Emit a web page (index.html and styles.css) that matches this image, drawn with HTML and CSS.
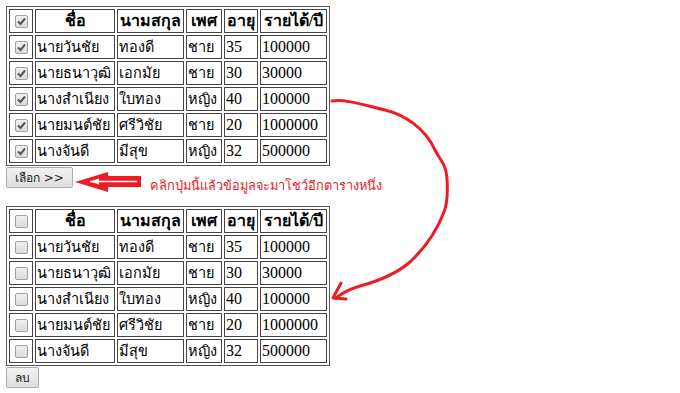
FILE: index.html
```html
<!DOCTYPE html>
<html lang="th">
<head>
<meta charset="utf-8">
<title>ตาราง</title>
<link rel="stylesheet" href="styles.css">
</head>
<body>
<table class="grid">
  <tr><th class="c-cb"><span class="cb on"><svg viewBox="0 0 13 13" width="13" height="13"><path d="M3 6.5 L5.5 9 L10 3.5" fill="none" stroke="#555" stroke-width="2"/></svg></span></th><th class="c-name">ชื่อ</th><th class="c-sur">นามสกุล</th><th class="c-sex">เพศ</th><th class="c-age">อายุ</th><th class="c-inc">รายได้/ปี</th></tr>
  <tr><td><span class="cb on"><svg viewBox="0 0 13 13" width="13" height="13"><path d="M3 6.5 L5.5 9 L10 3.5" fill="none" stroke="#555" stroke-width="2"/></svg></span></td><td class="t">นายวันชัย</td><td class="t">ทองดี</td><td class="t">ชาย</td><td>35</td><td>100000</td></tr>
  <tr><td><span class="cb on"><svg viewBox="0 0 13 13" width="13" height="13"><path d="M3 6.5 L5.5 9 L10 3.5" fill="none" stroke="#555" stroke-width="2"/></svg></span></td><td class="t">นายธนาวุฒิ</td><td class="t">เอกมัย</td><td class="t">ชาย</td><td>30</td><td>30000</td></tr>
  <tr><td><span class="cb on"><svg viewBox="0 0 13 13" width="13" height="13"><path d="M3 6.5 L5.5 9 L10 3.5" fill="none" stroke="#555" stroke-width="2"/></svg></span></td><td class="t">นางสำเนียง</td><td class="t">ใบทอง</td><td class="t">หญิง</td><td>40</td><td>100000</td></tr>
  <tr><td><span class="cb on"><svg viewBox="0 0 13 13" width="13" height="13"><path d="M3 6.5 L5.5 9 L10 3.5" fill="none" stroke="#555" stroke-width="2"/></svg></span></td><td class="t">นายมนต์ชัย</td><td class="t">ศรีวิชัย</td><td class="t">ชาย</td><td>20</td><td>1000000</td></tr>
  <tr><td><span class="cb on"><svg viewBox="0 0 13 13" width="13" height="13"><path d="M3 6.5 L5.5 9 L10 3.5" fill="none" stroke="#555" stroke-width="2"/></svg></span></td><td class="t">นางจันดี</td><td class="t">มีสุข</td><td class="t">หญิง</td><td>32</td><td>500000</td></tr>
</table>
<div class="btnrow"><button class="btn">เลือก &gt;&gt;</button></div>
<div class="gap"></div>
<table class="grid">
  <tr><th class="c-cb"><span class="cb"></span></th><th class="c-name">ชื่อ</th><th class="c-sur">นามสกุล</th><th class="c-sex">เพศ</th><th class="c-age">อายุ</th><th class="c-inc">รายได้/ปี</th></tr>
  <tr><td><span class="cb"></span></td><td class="t">นายวันชัย</td><td class="t">ทองดี</td><td class="t">ชาย</td><td>35</td><td>100000</td></tr>
  <tr><td><span class="cb"></span></td><td class="t">นายธนาวุฒิ</td><td class="t">เอกมัย</td><td class="t">ชาย</td><td>30</td><td>30000</td></tr>
  <tr><td><span class="cb"></span></td><td class="t">นางสำเนียง</td><td class="t">ใบทอง</td><td class="t">หญิง</td><td>40</td><td>100000</td></tr>
  <tr><td><span class="cb"></span></td><td class="t">นายมนต์ชัย</td><td class="t">ศรีวิชัย</td><td class="t">ชาย</td><td>20</td><td>1000000</td></tr>
  <tr><td><span class="cb"></span></td><td class="t">นางจันดี</td><td class="t">มีสุข</td><td class="t">หญิง</td><td>32</td><td>500000</td></tr>
</table>
<div class="btnrow"><button class="btn">ลบ</button></div>

<div class="note">คลิกปุ่มนี้แล้วข้อมูลจะมาโชว์อีกตารางหนึ่ง</div>
<svg class="marks" width="680" height="393" viewBox="0 0 680 393">
  <path d="M75 182 L108 172 L108 176 L141 176 L141 187 L108 187 L108 192 Z" fill="#ee1c24"/>
  <path d="M90 181.5 L137 181.5" stroke="#fff" stroke-width="1.5"/>
  <path d="M90 181.5 L99 178.5 L99 184.5 Z" fill="#fff"/>
  <path d="M332 101 C345 99 360 104 385 110 C405 115 425 128 435 150 C440 160 446 164 447 178 C448 195 447 205 444 212 C438 228 428 245 410 262 C395 275 375 282 360 286 C350 289 342 293 336 298" fill="none" stroke="#ee1c24" stroke-width="3" stroke-linecap="round"/>
  <path d="M341 283 L333 298 L346 299" fill="none" stroke="#ee1c24" stroke-width="3" stroke-linecap="round" stroke-linejoin="round"/>
</svg>
</body>
</html>
```
FILE: styles.css
```css
html, body {
  margin: 0;
  padding: 0;
  background: #fff;
}
body {
  padding: 6px;
  font-family: "Liberation Serif", "Times New Roman", serif;
  font-size: 16px;
  color: #000;
  position: relative;
}
.grid {
  border: 1px solid #555;
  border-spacing: 2px;
  table-layout: fixed;
  width: 324px;
}
.grid th, .grid td {
  box-sizing: border-box;
  border: 1px solid #444;
  height: 24px;
  padding: 0 1px;
  line-height: 20px;
  white-space: nowrap;
  overflow: hidden;
  text-align: left;
  font-weight: normal;
}
.grid td.t {
  font-size: 14.5px;
}
.grid th {
  font-weight: bold;
  text-align: center;
}
.c-cb { width: 24px; }
.c-name { width: 80px; }
.c-sur { width: 67px; }
.c-sex { width: 36px; }
.c-age { width: 34px; }
.c-inc { width: 67px; }
.grid td:first-child, .grid th:first-child {
  text-align: center;
  padding: 0;
}
.cb {
  display: inline-block;
  box-sizing: border-box;
  width: 13px;
  height: 13px;
  border: 1px solid #a0a0a0;
  border-radius: 2px;
  background: linear-gradient(#f0f0f0, #dcdcdc);
  vertical-align: middle;
  position: relative;
  top: -1px;
}
.cb svg {
  position: absolute;
  left: -1px;
  top: -1px;
}
.btnrow {
  display: flex;
  padding-top: 1px;
}
.btn {
  font-family: "DejaVu Sans", Tahoma, sans-serif;
  font-size: 12px;
  height: 21px;
  padding: 0 8px;
  border: 1px solid #adadad;
  border-radius: 2px;
  background: linear-gradient(#f2f2f2, #dedede);
  color: #222;
}
.gap {
  height: 18px;
}
.note {
  position: absolute;
  left: 150px;
  top: 175px;
  font-family: "DejaVu Sans", Tahoma, sans-serif;
  font-size: 12.8px;
  color: #e8202c;
  white-space: nowrap;
}
.marks {
  position: absolute;
  left: 0;
  top: 0;
  pointer-events: none;
}
```
